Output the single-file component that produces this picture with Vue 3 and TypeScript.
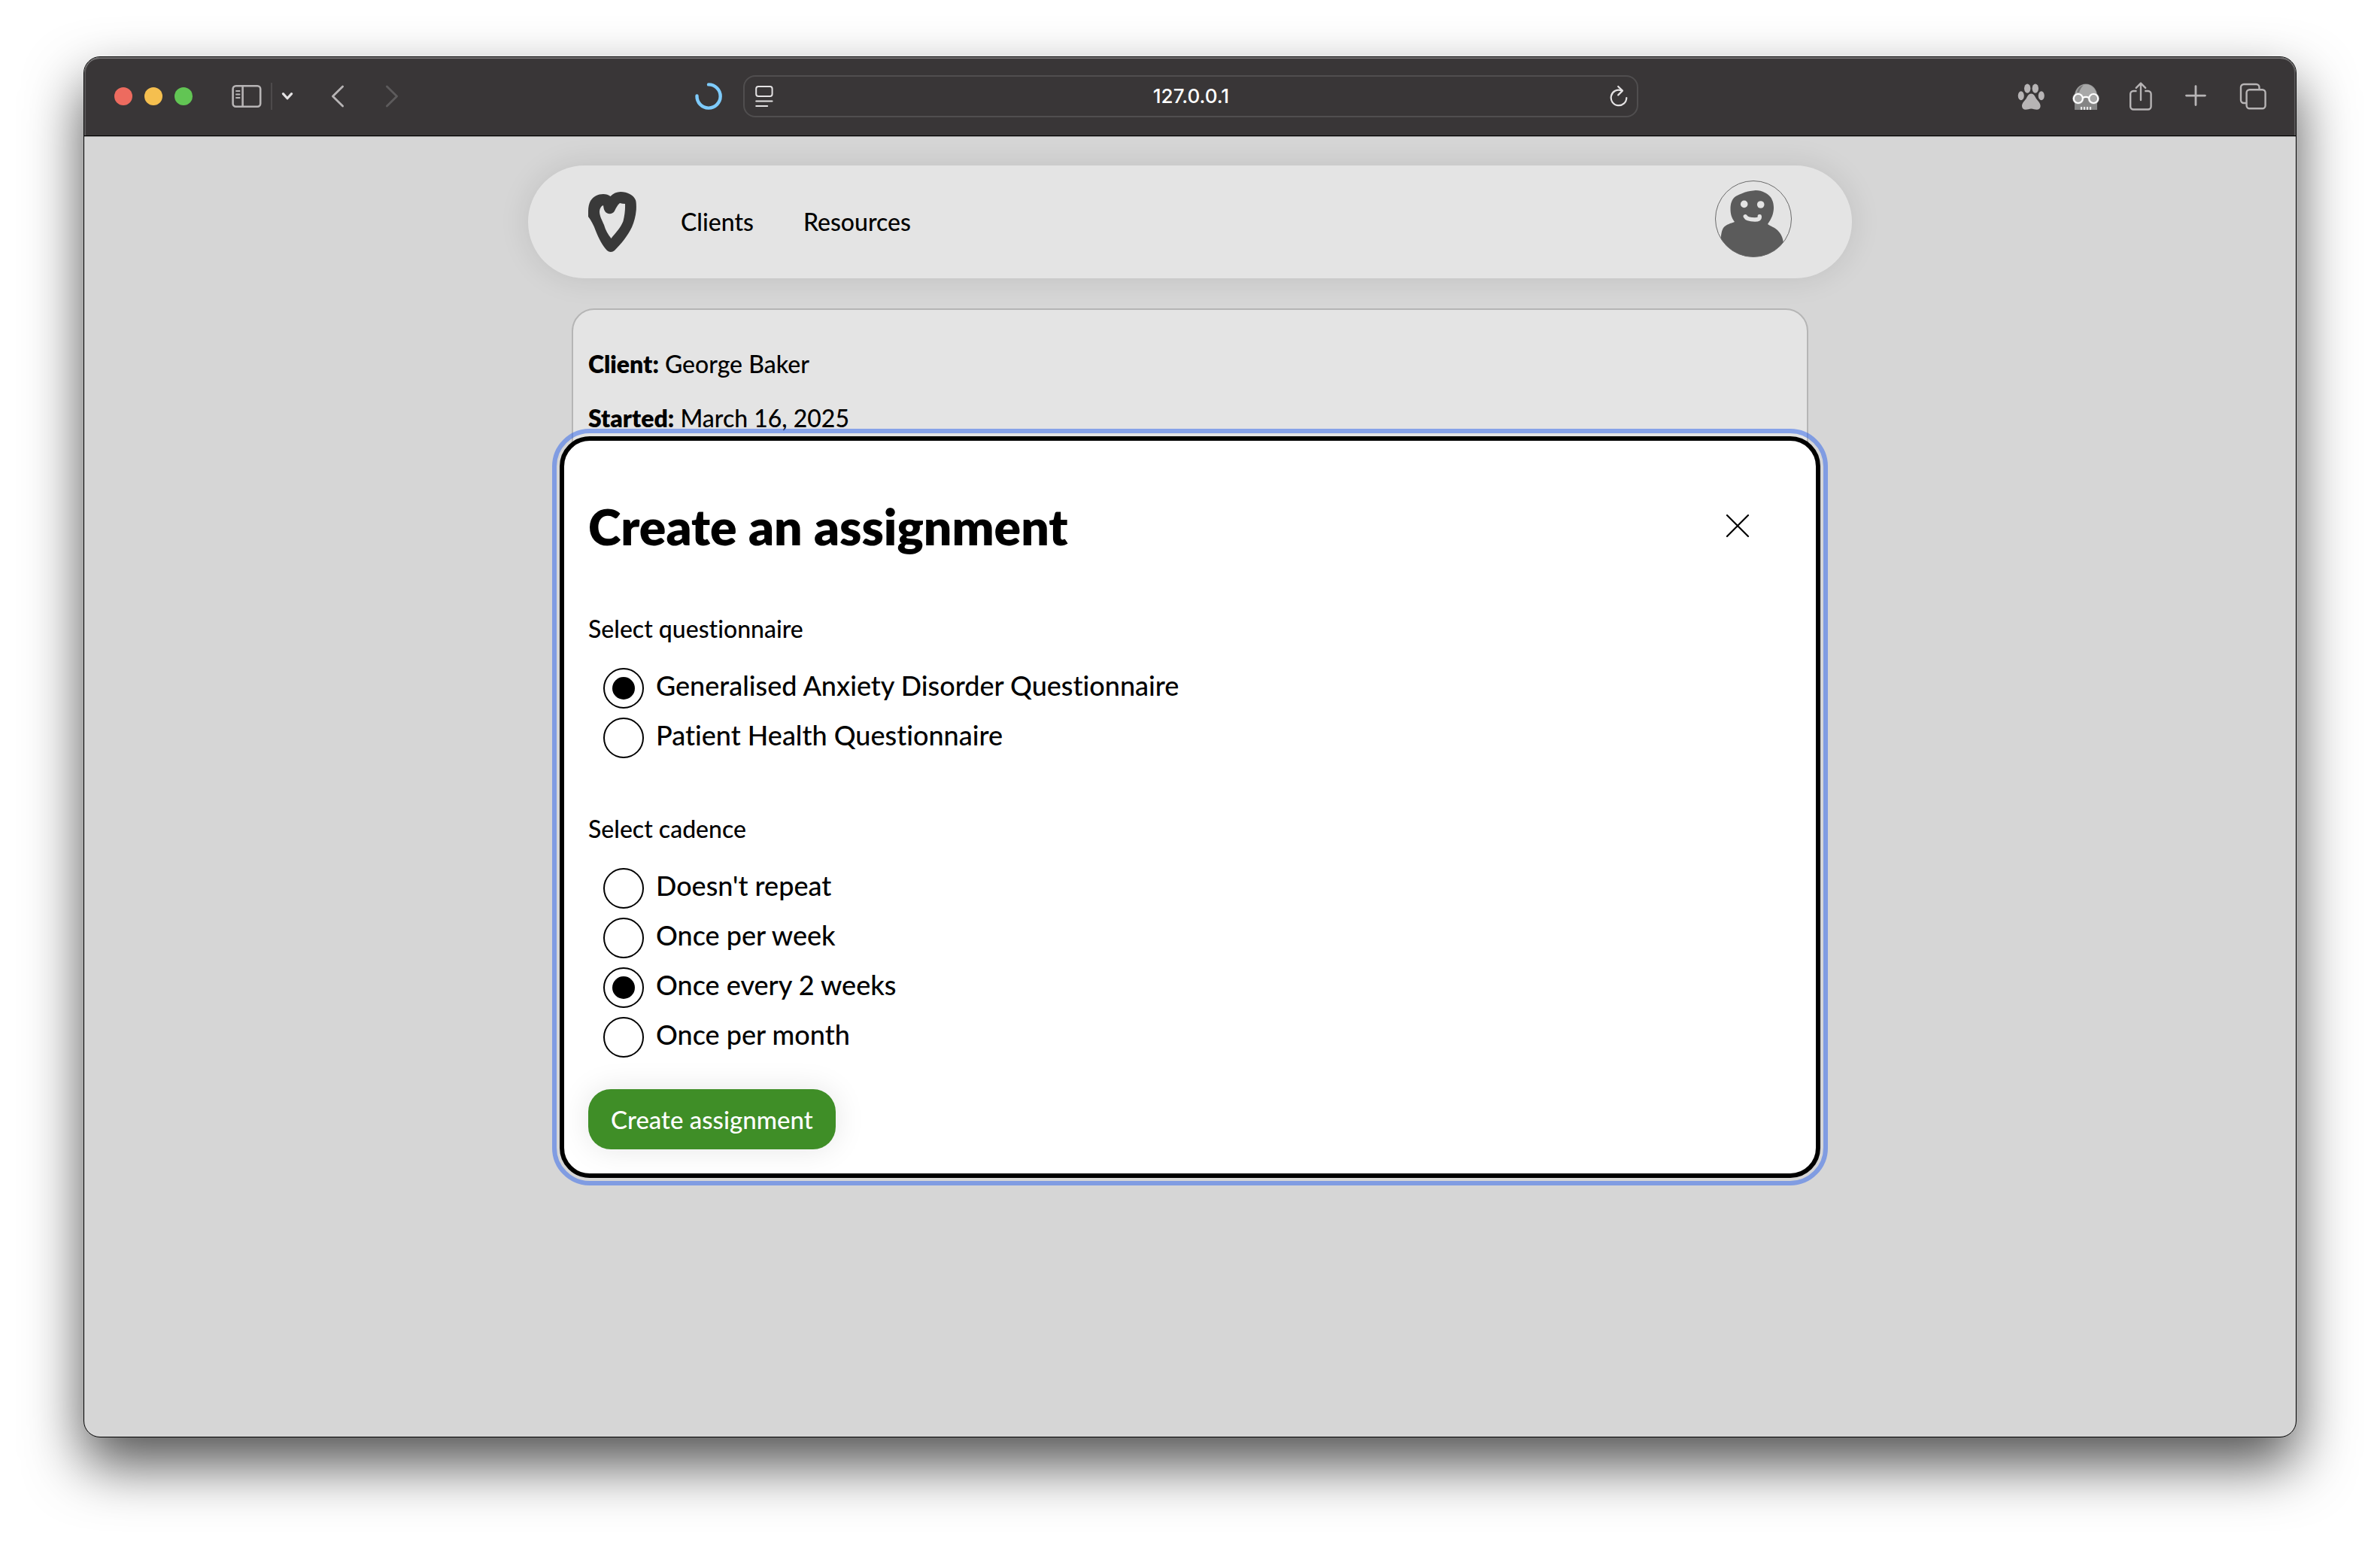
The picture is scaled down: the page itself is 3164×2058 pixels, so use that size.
<script setup lang="ts">
import { ref } from 'vue'

interface Option {
  value: string
  label: string
}

const questionnaires: Option[] = [
  { value: 'gad', label: 'Generalised Anxiety Disorder Questionnaire' },
  { value: 'phq', label: 'Patient Health Questionnaire' },
]

const cadences: Option[] = [
  { value: 'none', label: "Doesn't repeat" },
  { value: 'weekly', label: 'Once per week' },
  { value: 'biweekly', label: 'Once every 2 weeks' },
  { value: 'monthly', label: 'Once per month' },
]

const questionnaire = ref('gad')
const cadence = ref('biweekly')
const address = ref('127.0.0.1')
</script>

<template>
  <div class="desktop">
    <div class="window">
      <header class="toolbar">
        <div class="tools-left">
          <div class="lights">
            <button class="light red" aria-label="Close window"></button>
            <button class="light yellow" aria-label="Minimise window"></button>
            <button class="light green" aria-label="Zoom window"></button>
          </div>
          <button class="tool sidebar" aria-label="Sidebar">
            <svg width="40" height="32" viewBox="0 0 40 32" fill="none" stroke="#b7b4b5" stroke-width="2.6">
              <rect x="1.6" y="2.2" width="36.6" height="27.6" rx="4" />
              <path d="M14.6 2v28" />
              <path d="M6 9h4.6M6 13.5h4.6M6 18h4.6" stroke-width="1.8" stroke-linecap="round" />
            </svg>
          </button>
          <span class="divider"></span>
          <button class="tool chevron" aria-label="Tab groups">
            <svg width="16" height="12" viewBox="0 0 16 12" fill="none" stroke="#e4e2e3" stroke-width="3.2" stroke-linecap="round" stroke-linejoin="round">
              <path d="M2.4 2.6L8 8.8l5.6-6.2" />
            </svg>
          </button>
          <button class="tool back" aria-label="Back">
            <svg width="18" height="30" viewBox="0 0 18 30" fill="none" stroke="#b7b4b5" stroke-width="2.8" stroke-linecap="round" stroke-linejoin="round">
              <path d="M15.6 2L2.4 15l13.2 13" />
            </svg>
          </button>
          <button class="tool forward" aria-label="Forward">
            <svg width="18" height="30" viewBox="0 0 18 30" fill="none" stroke="#5d5b5c" stroke-width="2.8" stroke-linecap="round" stroke-linejoin="round">
              <path d="M2.4 2l13.2 13L2.4 28" />
            </svg>
          </button>
          <svg class="spinner" width="36" height="36" viewBox="0 0 36 36" fill="none" stroke="#7ecbfb" stroke-width="4.4" stroke-linecap="round">
            <path d="M18 2.4A15.6 15.6 0 1 1 2.5 17.5" />
          </svg>
        </div>

        <div class="address">
          <button class="tool" aria-label="Page menu">
            <svg width="24" height="30" viewBox="0 0 24 30" fill="none" stroke="#e4e2e3" stroke-width="2">
              <rect x="1.2" y="2" width="21.4" height="13" rx="3" />
              <path d="M1.2 21.5h21.4M1.2 28h15" stroke-linecap="round" />
            </svg>
          </button>
          <input v-model="address" class="url" type="text" aria-label="Address" />
          <button class="tool" aria-label="Reload">
            <svg width="24" height="30" viewBox="0 0 24 30" fill="none" stroke="#e4e2e3" stroke-width="2.2" stroke-linecap="round" stroke-linejoin="round">
              <path d="M15.5 7.2A10.3 10.3 0 1 0 22.3 17" />
              <path d="M11.2 2l5.8 5.6-5.8 5.8" />
            </svg>
          </button>
        </div>

        <div class="tools-right">
          <button class="tool" aria-label="Paw extension">
            <svg width="36" height="36" viewBox="0 0 36 36" fill="#b7b4b5">
              <ellipse cx="13.2" cy="7.6" rx="4.2" ry="6.2" />
              <ellipse cx="23.8" cy="7.6" rx="4.2" ry="6.2" />
              <ellipse cx="4.8" cy="17.3" rx="4" ry="6" />
              <ellipse cx="31.8" cy="17.3" rx="4" ry="6" />
              <path d="M18.300 14.500c-3.300 0-5 3.300-6.300 6-1.300 2.700-6 5.800-6 10.500 0 3 2 4.700 5 4.700 2.700 0 4.600-1.300 7.300-1.300s4.600 1.300 7.300 1.300c3 0 5-1.700 5-4.700 0-4.700-4.700-7.800-6-10.500-1.300-2.700-3-6-6.300-6z" />
            </svg>
          </button>
          <button class="tool" aria-label="Privacy extension">
            <svg class="wide" width="36" height="36" viewBox="2 0 36 36">
              <path d="M5 36V17a15 15.500 0 0 1 30 0v19z" fill="#858585" />
              <path d="M5.500 18a14.500 16 0 0 1 29 0z" fill="#a8a8a8" />
              <path d="M8 13c1-5 4-8.500 9-10-3 3-5 6-6 10z" fill="#777" />
              <circle cx="9.8" cy="21" r="7.8" fill="#bdbdbd" opacity=".5" />
              <circle cx="30.2" cy="21" r="7.8" fill="#bdbdbd" opacity=".5" />
              <circle cx="9.8" cy="21" r="6" fill="#a6a6a6" stroke="#fff" stroke-width="2.2" />
              <circle cx="30.2" cy="21" r="6" fill="#a6a6a6" stroke="#fff" stroke-width="2.2" />
              <path d="M16 19.800q4-1.800 8 0" fill="none" stroke="#fff" stroke-width="2.4" />
              <path d="M14 32v4M18 32v4M22 32v4M26 32v4" stroke="#e6e6e6" stroke-width="2.2" />
            </svg>
          </button>
          <button class="tool" aria-label="Share">
            <svg width="36" height="40" viewBox="0 0 36 40" fill="none" stroke="#b7b4b5" stroke-width="2.4" stroke-linecap="round" stroke-linejoin="round">
              <path d="M12.500 13H8.200a4 4 0 0 0-4 4v16.500a4 4 0 0 0 4 4h19.400a4 4 0 0 0 4-4V17a4 4 0 0 0-4-4h-4.300" stroke-linecap="butt" />
              <path d="M18 25V3M11.800 8.800L18 2.600l6.200 6.200" />
            </svg>
          </button>
          <button class="tool" aria-label="New tab">
            <svg width="36" height="36" viewBox="0 0 36 36" fill="none" stroke="#b7b4b5" stroke-width="2.8" stroke-linecap="round">
              <path d="M18 4.600v25M5.500 17.100h25" />
            </svg>
          </button>
          <button class="tool tabs" aria-label="Tab overview">
            <svg width="36" height="36" viewBox="0 0 36 36" fill="none" stroke="#b7b4b5" stroke-width="2.4">
              <rect x="9.6" y="9.2" width="25" height="25" rx="4" />
              <path d="M9.600 27H6a4 4 0 0 1-4-4V6a4 4 0 0 1 4-4h16.500a4 4 0 0 1 4 4v3.200" />
            </svg>
          </button>
        </div>
      </header>

      <div class="page">
        <nav class="navbar">
          <a class="logo" href="#" aria-label="Home">
            <svg width="64" height="80" viewBox="0 0 64 80" fill="#393939" fill-rule="evenodd">
              <path d="M29.500 6C33 2 38 0 43 0c9 0 17 4 20 11 1 3 1 8 .8 13C63 33 61 40 58 47c-6 12-14 22-23 31-3 2.600-7 2.600-10 0C19 72 14 62 10 52 7 44 4 38 0 33v-7C0 20 1 16 3 12 7 6 13 3 20 3c4 0 7 1 9.500 3zM20 18c.5 3 .6 5 2 7.500 3 5 10 5 13 0 2-4 3.500-7.500 7-10.500 2.300.6 4.600.8 7 1 .3 8-.6 15-2.500 23C43 48 36 55 30.500 62 26 56 23 51 21 44c-3-7-6-12-6-18 .3-4 2-7 5-8z" />
            </svg>
          </a>
          <a class="nav-link" href="#clients">Clients</a>
          <a class="nav-link" href="#resources">Resources</a>
          <button class="avatar" aria-label="Account">
            <svg width="102" height="102" viewBox="0 0 102 102">
              <defs>
                <clipPath id="avatar-clip"><circle cx="51" cy="51" r="50.5" /></clipPath>
              </defs>
              <g clip-path="url(#avatar-clip)">
                <path fill="#5b5b5b" d="M26 55c-4-5-5.500-11-5.500-17 0-7 1.500-13 7-17 3-2 7-3 10-4.500C43 14 49 14 54 13c6 0 11 2 15.500 5 6 4 8.500 11 8.500 18 0 8-3 15-8 22 4 3 9 4 13 8 5 5 7 10 8 17v20H7V81c1-6 1-13 4-18 4-5 10-6 15-8z" />
                <circle cx="38.7" cy="31.4" r="4.8" fill="#e4e4e4" />
                <circle cx="60.7" cy="32" r="4.8" fill="#e4e4e4" />
                <path d="M40.300 47.800c1.700 3.500 6.700 4.200 12.700 4.200 4.500 0 6.600-1 6.300-4.200" fill="none" stroke="#e4e4e4" stroke-width="5.4" stroke-linecap="round" stroke-linejoin="round" />
              </g>
              <circle cx="51" cy="51" r="50.5" fill="none" stroke="#6a6a6a" />
            </svg>
          </button>
        </nav>

        <main class="card">
          <p><strong>Client:</strong> George Baker</p>
          <p><strong>Started:</strong> March 16, 2025</p>
        </main>

        <div class="overlay">
          <dialog class="dialog" open aria-labelledby="dialog-title">
            <div class="dialog-head">
              <h1 id="dialog-title">Create an assignment</h1>
              <button class="close" aria-label="Close">
                <svg width="32" height="32" viewBox="0 0 32 32" fill="none" stroke="#000" stroke-width="2.2" stroke-linecap="round">
                  <path d="M2 1l28 28M30 1L2 29" />
                </svg>
              </button>
            </div>
            <form @submit.prevent>
              <fieldset>
                <legend>Select questionnaire</legend>
                <div class="options">
                  <label v-for="o in questionnaires" :key="o.value" class="option">
                    <input v-model="questionnaire" type="radio" name="questionnaire" :value="o.value" />
                    <span>{{ o.label }}</span>
                  </label>
                </div>
              </fieldset>
              <fieldset>
                <legend>Select cadence</legend>
                <div class="options">
                  <label v-for="o in cadences" :key="o.value" class="option">
                    <input v-model="cadence" type="radio" name="cadence" :value="o.value" />
                    <span>{{ o.label }}</span>
                  </label>
                </div>
              </fieldset>
              <button class="submit" type="submit">Create assignment</button>
            </form>
          </dialog>
        </div>
      </div>
    </div>
  </div>
</template>

<style>
body {
  background: #fff;
}
</style>

<style scoped>
* {
  box-sizing: border-box;
}

button {
  padding: 0;
  border: 0;
  background: none;
  font: inherit;
}

svg {
  display: block;
}

.desktop {
  display: flex;
  min-height: 100vh;
  padding: 75px 111px 147px;
  color: #000;
  font-family: Lato, "Liberation Sans", sans-serif;
  font-size: 32px;
  font-variant-ligatures: none;
  font-weight: 500;
  line-height: 40px;
}

.window {
  display: flex;
  flex: 1;
  flex-direction: column;
  min-width: 0;
  overflow: hidden;
  border: 1px solid #000;
  border-radius: 22px;
  background: #d6d6d6;
  box-shadow: 0 36px 76px rgba(0, 0, 0, 0.68);
}

.toolbar {
  display: grid;
  grid-template-columns: 1fr minmax(0, 1190px) 1fr;
  align-items: center;
  height: 105px;
  padding: 0 39px 0 40px;
  border-bottom: 1px solid #000;
  border-radius: 21px 21px 0 0;
  background: #393637;
  box-shadow: inset 0 2px #747273, inset 2px 0 #5a5859, inset -2px 0 #5a5859;
}

.tools-left,
.tools-right,
.lights {
  display: flex;
  align-items: center;
}

.lights {
  gap: 16px;
}

.light {
  width: 24px;
  height: 24px;
  border-radius: 50%;
}

.red {
  background: #ed6b5f;
}

.yellow {
  background: #f5bf4f;
}

.green {
  background: #62c554;
}

.sidebar {
  margin-left: 52px;
}

.divider {
  width: 2px;
  height: 36px;
  margin: 0 12px;
  background: #4d4a4b;
}

.back {
  margin-left: 50px;
}

.forward {
  margin-left: 54px;
}

.spinner {
  margin: 0 28px 0 auto;
}

.wide {
  overflow: visible;
}

.address {
  display: flex;
  align-items: center;
  height: 56px;
  padding: 0 12px 0 14px;
  border: 2px solid #504e4f;
  border-radius: 16px;
}

.url {
  flex: 1;
  min-width: 0;
  padding: 0;
  border: 0;
  outline: 0;
  background: none;
  color: #fff;
  font: 500 26px/32px Inter, sans-serif;
  text-align: center;
}

.tools-right {
  justify-content: flex-end;
  gap: 37px;
}

.tabs {
  padding-left: 3px;
}

.page {
  position: relative;
  display: flex;
  flex: 1;
  flex-direction: column;
  align-items: center;
  gap: 40px;
  padding: 39px 40px 360px;
  box-shadow: inset 0 1px #949494;
}

.navbar {
  display: flex;
  align-items: center;
  width: 100%;
  max-width: 1760px;
  height: 150px;
  padding: 0 80px;
  border-radius: 75px;
  background: #e4e4e4;
  box-shadow: 0 0 40px rgba(0, 0, 0, 0.1);
}

.nav-link {
  margin-right: 66px;
  color: #000;
  text-decoration: none;
}

.logo {
  margin-right: 59px;
}

.avatar {
  align-self: flex-start;
  margin: 20px 0 0 auto;
}

.card {
  width: 100%;
  max-width: 1644px;
  padding: 20px;
  border: 2px solid #b5b5b5;
  border-radius: 30px;
  background: #e4e4e4;
}

.card p {
  margin: 32px 0;
}

strong {
  font-weight: 800;
}

.overlay {
  position: absolute;
  inset: 0;
  display: flex;
  align-items: flex-start;
  justify-content: center;
  padding: 399px 40px 0;
}

.dialog {
  position: static;
  width: 100%;
  max-width: 1676px;
  margin: 0;
  padding: 32px;
  border: 6px solid #000;
  border-radius: 40px;
  outline: 6px solid rgba(42, 98, 238, 0.5);
  outline-offset: 4px;
  background: #fff;
  color: #000;
}

.dialog-head {
  display: flex;
  align-items: center;
  justify-content: space-between;
  padding: 42px 56px 76px 0;
}

h1 {
  margin: 0;
  font-size: 66px;
  font-weight: 800;
  line-height: 80px;
}

form {
  display: flex;
  flex-direction: column;
  align-items: flex-start;
}

fieldset {
  min-width: 0;
  margin: 0;
  padding: 0;
  border: 0;
}

fieldset + fieldset {
  margin-top: 74px;
}

legend {
  padding: 0;
}

.options {
  display: flex;
  flex-direction: column;
  gap: 12px;
  padding: 32px 0 0 20px;
}

.option {
  display: flex;
  gap: 16px;
  height: 54px;
  font-size: 36px;
  line-height: 46px;
}

.option input {
  display: grid;
  place-content: center;
  width: 54px;
  height: 54px;
  margin: 0;
  border: 2px solid #000;
  border-radius: 50%;
  appearance: none;
}

.option input:checked::before {
  width: 30px;
  height: 30px;
  border-radius: 50%;
  background: #000;
  content: "";
}

.submit {
  height: 80px;
  margin-top: 42px;
  padding: 0 30px;
  border-radius: 30px;
  background: #3f8e27;
  box-shadow: 0 0 40px rgba(0, 0, 0, 0.1);
  color: #fff;
  font-size: 33px;
}
</style>
